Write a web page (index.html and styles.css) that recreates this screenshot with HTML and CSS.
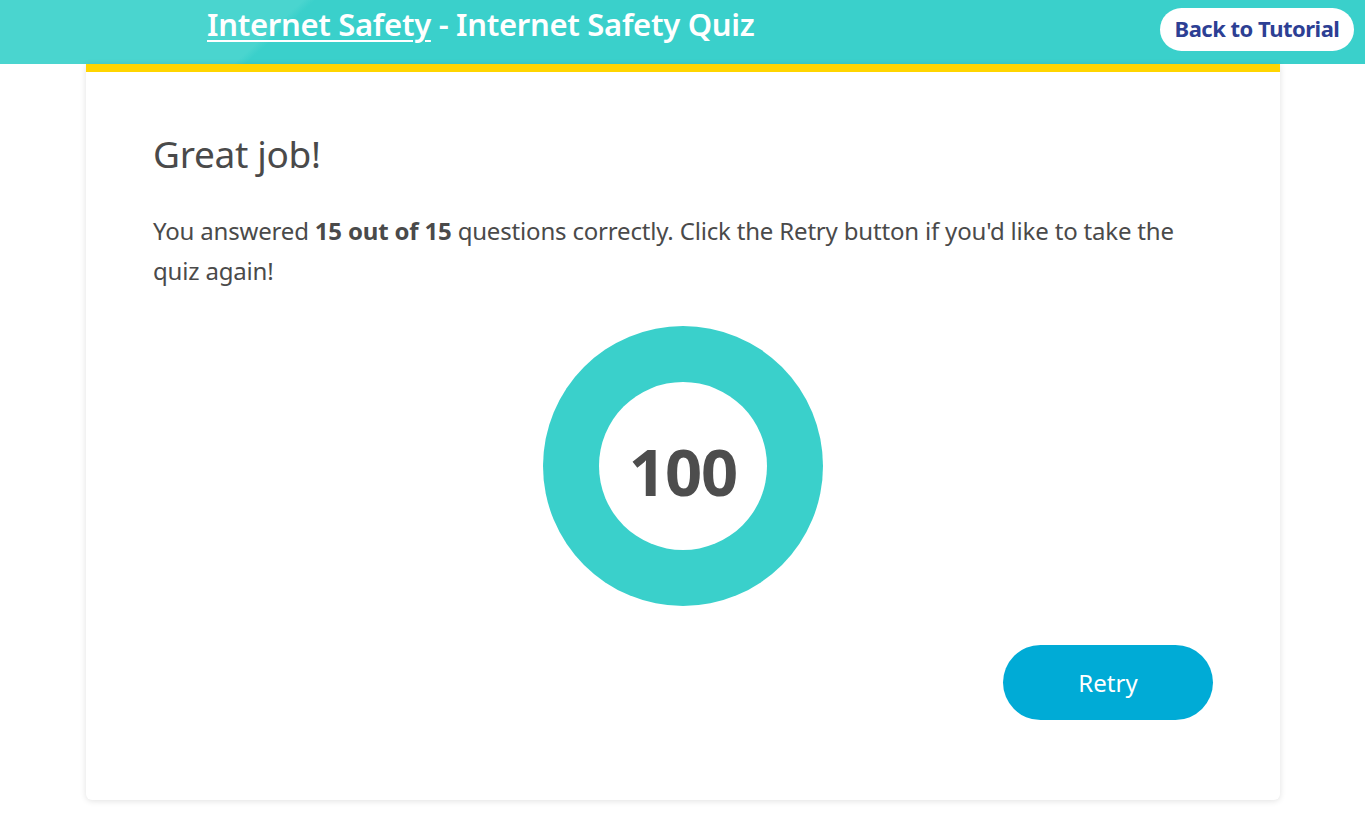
FILE: index.html
```html
<!DOCTYPE html>
<html lang="en">
<head>
<meta charset="utf-8">
<title>Internet Safety Quiz</title>
<link rel="stylesheet" href="styles.css">
</head>
<body>
<header class="topbar">
  <h1 class="topbar-title"><a href="#" class="topbar-link">Internet Safety</a> - Internet Safety Quiz</h1>
  <a href="#" class="back-btn">Back to Tutorial</a>
</header>
<main class="card">
  <h2 class="result-title">Great job!</h2>
  <p class="result-text">You answered <strong>15 out of 15</strong> questions correctly. Click the Retry button if you'd like to take the quiz again!</p>
  <div class="score">
    <div class="donut">
      <div class="donut-hole"><span class="score-num">100</span></div>
    </div>
  </div>
  <div class="actions">
    <button class="retry-btn" type="button">Retry</button>
  </div>
</main>
</body>
</html>
```

FILE: styles.css
```css
* { box-sizing: border-box; }
html, body { margin: 0; padding: 0; background: #fff; }
body {
  font-family: "Noto Sans", "Open Sans", sans-serif;
  color: #4a4a4a;
  width: 1365px;
  min-height: 830px;
}
.topbar {
  height: 64px;
  display: flex;
  align-items: center;
  justify-content: space-between;
  padding: 0 11px 0 207px;
  background: linear-gradient(137.5deg, #4ad5cf 0, #4ad5cf 205px, #3ad0cb 213px, #3ad0cb 100%);
}
.topbar-title {
  margin: 0;
  font-size: 31px;
  font-weight: 600;
  color: #fff;
  line-height: 1;
  position: relative;
  top: -8px;
  letter-spacing: -0.3px;
}
.topbar-link { color: #fff; text-decoration: underline; text-decoration-thickness: 2px; text-underline-offset: 4px; }
.back-btn {
  display: flex;
  align-items: center;
  justify-content: center;
  width: 194px;
  height: 43px;
  background: #fff;
  border-radius: 22px;
  color: #2d3f94;
  font-weight: 700;
  font-size: 22px;
  text-decoration: none;
  letter-spacing: -0.5px;
  position: relative;
  top: -3px;
  padding-bottom: 2px;
}
.card {
  width: 1194px;
  margin: 0 0 0 86px;
  border-top: 8px solid #ffd500;
  background: #fff;
  border-radius: 0 0 6px 6px;
  box-shadow: 0 1px 6px rgba(0,0,0,0.12);
  padding: 58px 67px 80px;
  min-height: 736px;
}
.result-title {
  margin: 0;
  font-size: 37px;
  font-weight: 400;
  line-height: 48px;
  letter-spacing: -0.3px;
  color: #4a4a4a;
}
.result-text {
  margin: 33px 0 0;
  font-size: 24px;
  line-height: 40px;
  letter-spacing: -0.18px;
  color: #4a4a4a;
}
.result-text strong { font-weight: 700; }
.score {
  display: flex;
  justify-content: center;
  margin-top: 35px;
}
.donut {
  width: 280px;
  height: 280px;
  border-radius: 50%;
  background: #3ad0cb;
  display: flex;
  align-items: center;
  justify-content: center;
}
.donut-hole {
  width: 168px;
  height: 168px;
  border-radius: 50%;
  background: #fff;
  display: flex;
  align-items: center;
  justify-content: center;
}
.score-num {
  font-size: 65px;
  font-weight: 700;
  color: #4d4d4d;
  position: relative;
  top: 5px;
  letter-spacing: -1px;
}
.actions {
  display: flex;
  justify-content: flex-end;
  margin-top: 39px;
}
.retry-btn {
  width: 210px;
  height: 75px;
  border: 0;
  border-radius: 38px;
  background: #00abd6;
  color: #fff;
  font-family: inherit;
  font-size: 24px;
  font-weight: 400;
  cursor: pointer;
}
```
